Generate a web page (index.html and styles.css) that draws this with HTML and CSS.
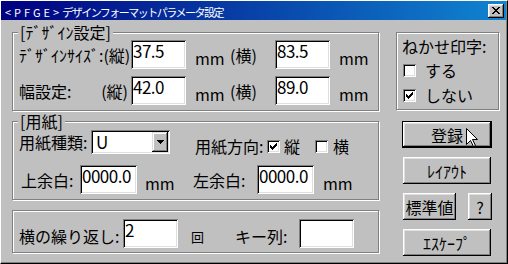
FILE: index.html
```html
<!DOCTYPE html>
<html lang="ja">
<head>
  <meta charset="UTF-8" />
  <title>デザインフォーマットパラメータ設定</title>
  <link rel="stylesheet" href="styles.css">
</head>
<body>
  <div class="window">
    <div class="titlebar">
      <span class="title"><span class="title-code">&lt;PFGE&gt;</span><span class="title-name">デザインフォーマットパラメータ設定</span></span>
      <button class="close-btn" aria-label="閉じる">
        <svg width="8" height="7" viewBox="0 0 8 7"><path d="M0 0h2v1h-2z M6 0h2v1h-2z M1 1h2v1h-2z M5 1h2v1h-2z M2 2h4v1h-4z M3 3h2v1h-2z M2 4h4v1h-4z M1 5h2v1h-2z M5 5h2v1h-2z M0 6h2v1h-2z M6 6h2v1h-2z"/></svg>
      </button>
    </div>

    <div class="content">
      <div class="left-col">
        <fieldset class="group">
          <legend>[ﾃﾞｻﾞｲﾝ設定]</legend>
          <div class="design-grid">
            <span class="lbl">ﾃﾞｻﾞｲﾝｻｲｽﾞ:(縦)</span>
            <input class="field" type="text" value="37.5">
            <span class="unit">mm</span>
            <span class="lbl">(横)</span>
            <input class="field" type="text" value="83.5">
            <span class="unit">mm</span>

            <span class="lbl lbl-split"><span>幅設定:</span><span>(縦)</span></span>
            <input class="field" type="text" value="42.0">
            <span class="unit">mm</span>
            <span class="lbl">(横)</span>
            <input class="field" type="text" value="89.0">
            <span class="unit">mm</span>
          </div>
        </fieldset>

        <fieldset class="group paper">
          <legend>[用紙]</legend>
          <div class="row paper-row">
            <span class="lbl paper-type">用紙種類:</span>
            <div class="combo">
              <span class="combo-text">U</span>
              <span class="combo-btn">
                <svg width="7" height="4" viewBox="0 0 7 4"><path d="M0 0h7v1h-7z M1 1h5v1h-5z M2 2h3v1h-3z M3 3h1v1h-1z"/></svg>
              </span>
            </div>
            <span class="orient">
              <span class="lbl orient-label">用紙方向:</span>
              <span class="check">
                <svg width="7" height="7" viewBox="0 0 7 7"><path d="M6 0h1v1h-1z M5 1h2v1h-2z M0 2h1v1h-1z M4 2h3v1h-3z M0 3h2v1h-2z M3 3h3v1h-3z M0 4h5v1h-5z M1 5h3v1h-3z M2 6h1v1h-1z"/></svg>
              </span>
              <span class="lbl orient-opt">縦</span>
              <span class="check orient-check2"></span>
              <span class="lbl orient-opt2">横</span>
            </span>
          </div>
          <div class="row margin-row">
            <span class="lbl top-label">上余白:</span>
            <input class="field field-wide" type="text" value="0000.0">
            <span class="unit unit-fixed">mm</span>
            <span class="lbl left-label">左余白:</span>
            <input class="field field-wide" type="text" value="0000.0">
            <span class="unit">mm</span>
          </div>
        </fieldset>

        <div class="group repeat">
          <span class="lbl repeat-label">横の繰り返し:</span>
          <input class="field" type="text" value="2">
          <span class="times">回</span>
          <span class="lbl key-label">キー列:</span>
          <input class="field" type="text" value="">
        </div>
      </div>

      <div class="right-col">
        <div class="group nekase">
          <div class="lbl">ねかせ印字:</div>
          <div class="check-row first"><span class="check"></span><span class="lbl">する</span></div>
          <div class="check-row second">
            <span class="check">
              <svg width="7" height="7" viewBox="0 0 7 7"><path d="M6 0h1v1h-1z M5 1h2v1h-2z M0 2h1v1h-1z M4 2h3v1h-3z M0 3h2v1h-2z M3 3h3v1h-3z M0 4h5v1h-5z M1 5h3v1h-3z M2 6h1v1h-1z"/></svg>
            </span>
            <span class="lbl">しない</span>
          </div>
        </div>

        <div class="buttons">
          <button class="btn btn-default">登録
            <svg class="cursor" width="13" height="20" viewBox="0 0 13 20"><path d="M0.5 0.5 L0.5 16.5 L4.5 12.5 L7.5 18.5 L9.5 17.5 L6.5 11.5 L11.5 11.5 Z" fill="#fff" stroke="#000"/></svg>
          </button>
          <button class="btn">ﾚｲｱｳﾄ</button>
          <div class="btn-pair">
            <button class="btn btn-std">標準値</button>
            <button class="btn btn-help">?</button>
          </div>
          <button class="btn">ｴｽｹｰﾌﾟ</button>
        </div>
      </div>
    </div>
  </div>
</body>
</html>
```

FILE: styles.css
```css
* {
  box-sizing: border-box;
}

body {
  margin: 0;
  background: #c0c0c0;
  color: #000;
  font-family: "Noto Sans CJK JP", sans-serif;
  font-size: 16px;
  line-height: 16px;
}

.window {
  width: 508px;
  height: 264px;
  background: #c0c0c0;
  border-top: 1px solid #fff;
  border-left: 1px solid #fff;
  border-right: 1px solid #000;
  border-bottom: 1px solid #000;
  box-shadow: inset -1px -1px #808080;
}

/* title bar */
.titlebar {
  height: 19px;
  margin-right: 1px;
  padding: 0 2px 0 4px;
  display: flex;
  align-items: center;
  justify-content: space-between;
  background: linear-gradient(to right, #000080, #1084d0);
  color: #fff;
}

.title {
  font-size: 11px;
  line-height: 12px;
  padding-top: 2px;
  white-space: nowrap;
}

.title-code {
  letter-spacing: 3px;
}

.title-name {
  letter-spacing: -1.5px;
}

.close-btn {
  width: 16px;
  height: 14px;
  padding: 0;
  border: 0;
  display: flex;
  align-items: center;
  justify-content: center;
  background: #c0c0c0;
  box-shadow: inset -1px -1px #000, inset 1px 1px #fff, inset -2px -2px #808080, inset 2px 2px #dfdfdf;
}

/* shared pieces */
.content {
  display: flex;
  padding: 4px 0 0 11px;
}

.left-col {
  width: 367px;
}

.right-col {
  width: 103px;
  margin-left: 17px;
  padding-top: 8px;
}

.group {
  margin: 0;
  border: 1px solid #808080;
  box-shadow: inset 1px 1px #fff, 1px 1px #fff;
  min-width: 0;
}

fieldset.group {
  padding: 0 4px 5px 6px;
}

legend {
  margin-left: -1px;
  padding: 0 2px;
  height: 17px;
  line-height: 17px;
  background: #c0c0c0;
}

.lbl {
  white-space: nowrap;
}

.field {
  width: 55px;
  height: 29px;
  padding: 2px 2px 10px;
  border: 0;
  outline: none;
  background: #fff;
  color: #000;
  font-family: "Noto Sans CJK JP", sans-serif;
  font-size: 17px;
  line-height: 17px;
  letter-spacing: -0.5px;
  box-shadow: inset 1px 1px #808080, inset -1px -1px #fff, inset 2px 2px #000, inset -2px -2px #dfdfdf;
}

.unit {
  align-self: end;
  margin-bottom: 3px;
  padding-left: 9px;
}

.check {
  width: 13px;
  height: 13px;
  flex: none;
  display: flex;
  align-items: center;
  justify-content: center;
  background: #fff;
  box-shadow: inset 1px 1px #808080, inset -1px -1px #fff, inset 2px 2px #000, inset -2px -2px #dfdfdf;
}

/* design settings */
.design-grid {
  margin-top: -1px;
  display: grid;
  grid-template-columns: 112px 55px 44px 45px 55px 1fr;
  grid-template-rows: 29px 29px;
  row-gap: 7px;
  align-items: center;
}

.lbl-split {
  display: flex;
  justify-content: space-between;
  padding-right: 3px;
}

/* paper */
.paper {
  margin-top: 2px;
}

.row {
  display: flex;
  align-items: center;
}

.paper-row {
  height: 24px;
}

.paper-type {
  width: 72px;
}

.combo {
  width: 79px;
  height: 24px;
  padding: 2px;
  display: flex;
  background: #fff;
  box-shadow: inset 1px 1px #808080, inset -1px -1px #fff, inset 2px 2px #000, inset -2px -2px #dfdfdf;
}

.combo-text {
  padding: 2px 0 0 3px;
  font-size: 17px;
  line-height: 16px;
}

.combo-btn {
  width: 16px;
  height: 20px;
  margin-left: auto;
  display: flex;
  align-items: center;
  justify-content: center;
  background: #c0c0c0;
  box-shadow: inset -1px -1px #000, inset 1px 1px #dfdfdf, inset -2px -2px #808080, inset 2px 2px #fff;
}

.orient {
  margin: 8px 0 0 25px;
  display: flex;
  align-items: center;
}

.orient-label {
  width: 72px;
}

.orient-opt {
  margin-left: 4px;
}

.orient-check2 {
  margin-left: 15px;
}

.orient-opt2 {
  margin-left: 5px;
}

.margin-row {
  margin-top: 11px;
}

.top-label {
  width: 61px;
  padding-left: 2px;
}

.field-wide {
  width: 57px;
}

.unit-fixed {
  width: 56px;
  padding-left: 8px;
}

.left-label {
  width: 64px;
}

/* repeat */
.repeat {
  margin-top: 10px;
  height: 43px;
  padding: 9px 4px 5px 6px;
  display: flex;
  align-items: center;
}

.repeat-label {
  width: 104px;
  margin-top: 4px;
}

.times {
  margin: 6px 0 0 13px;
  font-size: 13px;
}

.key-label {
  width: 64px;
  margin: 4px 0 0 31px;
}

/* right column */
.nekase {
  height: 78px;
  padding: 5px 4px 0 5px;
}

.check-row {
  display: flex;
  align-items: center;
  gap: 9px;
  padding-left: 1px;
}

.check-row.first {
  margin-top: 8px;
}

.check-row.second {
  margin-top: 9px;
}

.buttons {
  margin-top: 11px;
  display: flex;
  flex-direction: column;
  gap: 9px;
}

.btn {
  position: relative;
  width: 88px;
  height: 27px;
  margin-left: 7px;
  padding: 0;
  border: 0;
  display: flex;
  align-items: center;
  justify-content: center;
  background: #c0c0c0;
  color: #000;
  font: inherit;
  box-shadow: inset -1px -1px #000, inset 1px 1px #fff, inset -2px -2px #808080, inset 2px 2px #dfdfdf;
}

.btn-default {
  width: 90px;
  margin-left: 6px;
  border: 1px solid #000;
}

.cursor {
  position: absolute;
  left: 63px;
  top: 6px;
}

.btn-pair {
  display: flex;
  gap: 12px;
}

.btn-std {
  width: 53px;
}

.btn-help {
  width: 24px;
  margin-left: 0;
}
```
